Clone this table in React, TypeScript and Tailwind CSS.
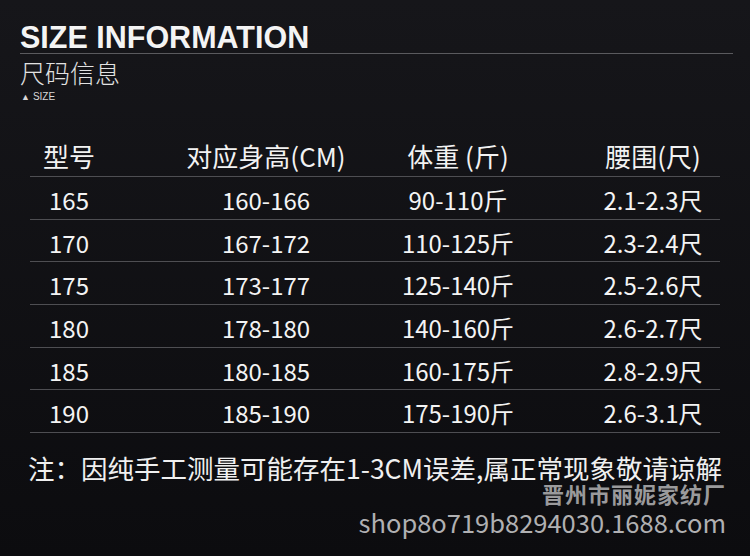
const rows = [
  ["165", "160-166", "90-110斤", "2.1-2.3尺"],
  ["170", "167-172", "110-125斤", "2.3-2.4尺"],
  ["175", "173-177", "125-140斤", "2.5-2.6尺"],
  ["180", "178-180", "140-160斤", "2.6-2.7尺"],
  ["185", "180-185", "160-175斤", "2.8-2.9尺"],
  ["190", "185-190", "175-190斤", "2.6-3.1尺"],
];

const cjk = { fontFamily: '"Noto Sans CJK SC", "Noto Sans", sans-serif' };

export default function App() {
  return (
    <div
      className="w-[750px] h-[556px] overflow-hidden bg-gradient-to-b from-[#16161a] to-[#0c0c0f] text-white flex flex-col"
      style={cjk}
    >
      {/* Heading */}
      <div className="pt-[20px] pl-[20px] pr-[17px]">
        <h1
          className="text-[30.5px] leading-[35px] font-bold text-[#f4f4f4]"
          style={{ fontFamily: '"Liberation Sans", Arial, sans-serif' }}
        >
          SIZE INFORMATION
        </h1>
        <div className="h-px bg-[#5a5a5e] mt-[-2px]" />
        <div className="text-[25px] leading-[28px] font-light text-[#e2e2e2] mt-[4px]">尺码信息</div>
        <div
          className="mt-[5px] text-[10px] leading-[12px] text-[#d8d8d8] pl-px flex items-center gap-[3px]"
          style={{ fontFamily: '"Liberation Sans", Arial, sans-serif' }}
        >
          <span className="text-[9px]">▲</span>
          <span>SIZE</span>
        </div>
      </div>

      {/* Table */}
      <div className="mx-[30px] w-[690px] mt-[23px]">
        <div className="grid grid-cols-[150px_172px_212px_156px] h-[51px] items-center border-b border-[#4e4e52] text-[26px] text-[#f2f2f2] pt-[8px]">
          <div className="pl-[13px]">型号</div>
          <div className="text-center">对应身高(CM)</div>
          <div className="text-center">体重 (斤)</div>
          <div className="text-center pl-[22px]">腰围(尺)</div>
        </div>
        {rows.map((r) => (
          <div
            key={r[0]}
            className="grid grid-cols-[150px_172px_212px_156px] h-[42.7px] items-center border-b border-[#4e4e52] text-[24px] text-[#f4f4f4] pt-[4px]"
          >
            <div className="pl-[19px]">{r[0]}</div>
            <div className="text-center">{r[1]}</div>
            <div className="text-center">{r[2]}</div>
            <div className="text-center pl-[22px]">{r[3]}</div>
          </div>
        ))}
      </div>

      {/* Note */}
      <div className="pl-[28px] mt-[19px] text-[26.5px] leading-[32px] text-[#f0f0f0] whitespace-nowrap">
        注：因纯手工测量可能存在1-3CM误差,属正常现象敬请谅解
      </div>

      {/* Watermark */}
      <div className="pr-[24px] flex flex-col items-end">
        <div className="mt-[-3px] text-[22px] leading-[24px] font-bold text-[#9a9a9c] tracking-[1px]">晋州市丽妮家纺厂</div>
        <div className="mt-[3px] text-[25.5px] leading-[28px] text-[#b0b0b2]">shop8o719b8294030.1688.com</div>
      </div>
    </div>
  );
}
